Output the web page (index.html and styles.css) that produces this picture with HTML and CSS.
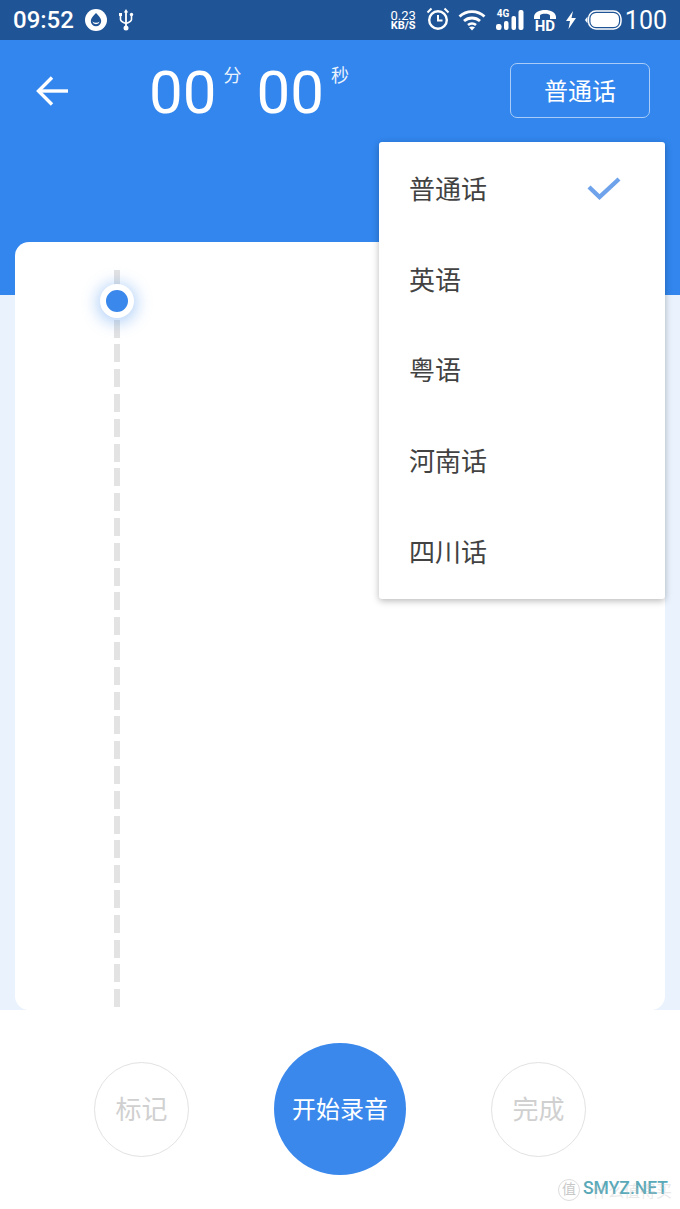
FILE: index.html
```html
<!DOCTYPE html>
<html lang="zh-CN">
<head>
    <meta charset="UTF-8">
    <meta name="viewport" content="width=device-width, initial-scale=1.0">
    <title>录音</title>
    <link rel="stylesheet" href="styles.css">
</head>
<body>

<div class="phone">
    <div class="status-bar">
        <div class="status-left">
            <span class="clock">09:52</span>
            <svg width="22" height="22" viewBox="0 0 22 22">
                <circle cx="11" cy="11" r="11" fill="#fff"/>
                <path d="M11 4c2.600 3 5.200 5 5.200 8a5.200 5.200 0 0 1-10.400 0C5.800 9 8.400 7 11 4z" fill="#1f5496"/>
                <path d="M7.300 12.500c2.300 1.600 5.100 1.600 7.400 0a3.900 3.900 0 0 1-7.400 0z" fill="#fff"/>
            </svg>
            <svg width="16" height="24" viewBox="0 0 16 24">
                <path d="M8 1l2.200 3.500H8.900V19H7.100V4.500H5.800z" fill="#fff"/>
                <circle cx="8" cy="20" r="2.500" fill="#fff"/>
                <path d="M2.500 7v4.500c0 2 2 2.500 5.500 4 3.500-1.500 5.500-2 5.500-4V7" fill="none" stroke="#fff" stroke-width="1.600"/>
                <rect x="1" y="5" width="3" height="3" fill="#fff"/>
                <circle cx="13.500" cy="6.500" r="1.700" fill="#fff"/>
            </svg>
        </div>
        <div class="status-right">
            <span class="speed">
                <span class="speed-value">0.23</span>
                <span class="speed-unit">KB/S</span>
            </span>
            <svg class="ic-alarm" width="24" height="24" viewBox="0 0 24 24" fill="none" stroke="#fff">
                <circle cx="12" cy="13" r="8.800" stroke-width="2.400"/>
                <path d="M12 8v5.500h4.500" stroke-width="2"/>
                <path d="M1.500 5.500L5.500 1.500M22.500 5.500L18.500 1.500" stroke-width="2"/>
            </svg>
            <svg width="28" height="22" viewBox="0 0 28 22" fill="none" stroke="#fff" stroke-width="2.800">
                <path d="M1.500 7.500c7-6.500 18-6.500 25 0"/>
                <path d="M6 12c4.500-4 11.500-4 16 0"/>
                <path d="M10 16c2.300-1.800 5.700-1.800 8 0"/>
                <path d="M14 21.500l-3-3.300c1.800-1 4.200-1 6 0z" fill="#fff" stroke="none"/>
            </svg>
            <span class="signal">
                <span class="signal-label">4G</span>
                <svg width="28" height="20" viewBox="0 0 28 20" fill="#fff">
                    <rect x="0" y="14" width="5.500" height="6" rx="2.200"/>
                    <rect x="8" y="11" width="4.500" height="9" rx="2"/>
                    <rect x="15.500" y="6" width="4.500" height="14" rx="2"/>
                    <rect x="22.500" y="0" width="5" height="20" rx="2"/>
                </svg>
            </span>
            <span class="hd">
                <svg width="24" height="11" viewBox="0 0 24 11">
                    <path d="M1 8C1 -1.500 23 -1.500 23 8v2h-6V6.500C17 4 7 4 7 6.500V10H1z" fill="#fff"/>
                </svg>
                <span class="hd-label">HD</span>
            </span>
            <svg width="12" height="18" viewBox="0 0 12 18"><path d="M8 0L1 10h4l-1.500 8L11 7H6.500z" fill="#fff"/></svg>
            <svg width="37" height="22" viewBox="0 0 37 22">
                <rect x="3.500" y="2" width="32.500" height="18" rx="7.500" fill="none" stroke="#fff" stroke-width="1.500"/>
                <rect x="5.500" y="4" width="28.500" height="14" rx="5.500" fill="#fff"/>
                <path d="M0 11l2.500-3.500v7z" fill="#fff"/>
            </svg>
            <span class="battery">100</span>
        </div>
    </div>

    <header class="top">
        <div class="top-row">
            <svg width="34" height="34" viewBox="0 0 34 34" fill="none" stroke="#fff" stroke-width="3.400">
                <path d="M33 17H5"/>
                <path d="M17 3.500L3.500 17 17 30.500"/>
            </svg>
            <div class="timer">
                <span class="digits">00</span>
                <span class="unit">分</span>
                <span class="digits">00</span>
                <span class="unit">秒</span>
            </div>
            <div class="lang-button">普通话</div>
        </div>
    </header>

    <main class="content">
        <div class="card">
            <div class="timeline"></div>
            <div class="dot"></div>
        </div>
    </main>

    <ul class="lang-menu">
        <li class="lang-item">
            普通话
            <svg width="34" height="24" viewBox="0 0 34 24" fill="none" stroke="#6ea3ec" stroke-width="4.400">
                <path d="M2 11l10.500 10L32 3"/>
            </svg>
        </li>
        <li class="lang-item">英语</li>
        <li class="lang-item">粤语</li>
        <li class="lang-item">河南话</li>
        <li class="lang-item">四川话</li>
    </ul>

    <footer class="controls">
        <div class="round-button">标记</div>
        <div class="record-button">开始录音</div>
        <div class="round-button">完成</div>
    </footer>

    <div class="watermark">
        <span class="wm-mark">值</span>
        <span class="wm-text">SMYZ.NET</span>
        <span class="wm-under">什么值得买</span>
    </div>
</div>

</body>
</html>
```

FILE: styles.css
```css
* {
    box-sizing: border-box;
}

body {
    margin: 0;
    padding: 0;
    background-color: #fff;
    font-family: Roboto, "Noto Sans CJK SC", sans-serif;
}

.phone {
    position: relative;
    width: 680px;
    height: 1209px;
    overflow: hidden;
    display: flex;
    flex-direction: column;
    background-color: #fff;
}

/* status bar */
.status-bar {
    height: 40px;
    padding: 0 13px;
    display: flex;
    justify-content: space-between;
    align-items: center;
    background-color: #1f5496;
    color: #fff;
}

.status-left {
    display: flex;
    align-items: center;
    gap: 11px;
}

.clock {
    font-size: 24px;
    font-weight: 500;
}

.status-right {
    display: flex;
    align-items: center;
    gap: 8px;
}

.speed {
    display: flex;
    flex-direction: column;
    align-items: center;
    margin-right: 2px;
}

.speed-value {
    font-size: 13px;
    line-height: 11px;
}

.speed-unit {
    font-size: 11px;
    font-weight: 700;
    line-height: 10px;
}

.ic-alarm {
    margin-top: -2px;
}

.signal {
    position: relative;
    display: flex;
    width: 28px;
    height: 20px;
    margin-left: 2px;
}

.signal-label {
    position: absolute;
    left: 1px;
    top: -1px;
    font-size: 10px;
    font-weight: 700;
    line-height: 9px;
}

.hd {
    display: flex;
    flex-direction: column;
    align-items: center;
    margin-left: 1px;
}

.hd-label {
    font-size: 15px;
    font-weight: 700;
    line-height: 12px;
}

.battery {
    font-size: 25px;
    margin-left: -5px;
}

/* blue header */
.top {
    height: 255px;
    background-color: #3286ee;
    color: #fff;
}

.top-row {
    height: 101px;
    padding: 0 30px 0 35px;
    display: flex;
    align-items: center;
}

.timer {
    display: flex;
    align-items: flex-start;
    margin-right: auto;
    padding-left: 80px;
    height: 77px;
}

.digits {
    font-size: 60px;
    line-height: 66px;
    margin-top: 8px;
}

.unit {
    font-size: 18px;
    line-height: 20px;
    margin: 14px 15px 0 7px;
    opacity: 0.9;
}

.lang-button {
    width: 140px;
    height: 55px;
    padding-bottom: 2px;
    border: 1px solid #a9cdf8;
    border-radius: 7px;
    display: flex;
    align-items: center;
    justify-content: center;
    font-size: 24px;
}

/* main area */
.content {
    flex: 1;
    padding: 0 15px;
    background-color: #e9f2fd;
}

.card {
    position: relative;
    height: 768px;
    margin-top: -53px;
    background-color: #fff;
    border-radius: 14px;
}

.timeline {
    position: absolute;
    left: 99px;
    top: 28px;
    bottom: 2px;
    width: 6px;
    background-image: repeating-linear-gradient(to bottom, #e3e3e3 0, #e3e3e3 18px, transparent 18px, transparent 24.800px);
}

.dot {
    position: absolute;
    left: 85px;
    top: 42px;
    width: 34px;
    height: 34px;
    border: 6.500px solid #fff;
    border-radius: 50%;
    background-color: #3a88ec;
    box-shadow: 0 2px 15px 3px rgba(58, 136, 236, 0.38);
}

/* dropdown */
.lang-menu {
    position: absolute;
    left: 379px;
    top: 142px;
    width: 286px;
    height: 457px;
    margin: 0;
    padding: 0.400px 0 0;
    list-style: none;
    background-color: #fff;
    border-radius: 3px;
    box-shadow: 0 2px 7px rgba(0, 0, 0, 0.28);
}

.lang-item {
    height: 90.600px;
    padding: 0 44px 0 30px;
    display: flex;
    align-items: center;
    justify-content: space-between;
    font-size: 26px;
    color: #424242;
}

/* bottom controls */
.controls {
    height: 199px;
    display: flex;
    align-items: center;
    justify-content: center;
    gap: 85px;
    padding-bottom: 1px;
    background-color: #fff;
}

.round-button {
    width: 95px;
    height: 95px;
    padding-bottom: 3px;
    border: 1.500px solid #e2e2e2;
    border-radius: 50%;
    display: flex;
    align-items: center;
    justify-content: center;
    font-size: 26px;
    color: #d0d0d0;
}

.record-button {
    width: 132px;
    height: 132px;
    padding-bottom: 3px;
    border-radius: 50%;
    display: flex;
    align-items: center;
    justify-content: center;
    font-size: 24px;
    color: #fff;
    background-color: #3a88ec;
}

/* watermark */
.watermark {
    position: absolute;
    right: 2px;
    bottom: 3px;
    width: 124px;
    height: 28px;
}

.wm-mark {
    position: absolute;
    left: 4px;
    top: 1px;
    width: 22px;
    height: 22px;
    border: 1px solid #ddd;
    border-radius: 50%;
    font-size: 14px;
    line-height: 19px;
    text-align: center;
    color: #c8c8c8;
}

.wm-text {
    position: absolute;
    left: 29px;
    top: 0;
    font-size: 17.500px;
    font-weight: 500;
    line-height: 20px;
    color: #5aa9b8;
}

.wm-under {
    position: absolute;
    left: 38px;
    top: 4px;
    font-size: 16px;
    line-height: 20px;
    color: rgba(190, 190, 190, 0.35);
}
```
